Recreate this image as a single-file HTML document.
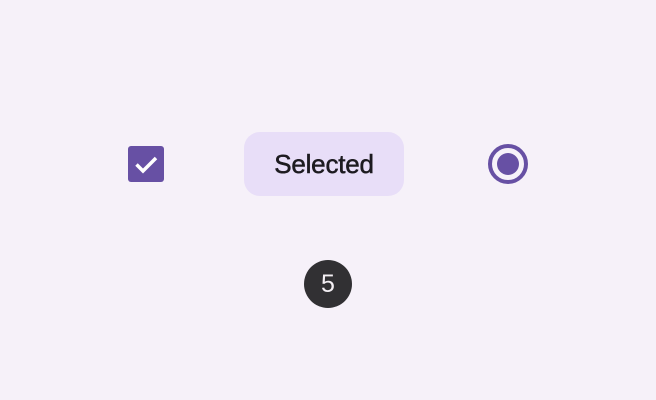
<!DOCTYPE html>
<html><head><style>
html,body{margin:0;padding:0;}
body{width:656px;height:400px;background:#f6f1f9;position:relative;overflow:hidden;font-family:"Liberation Sans",sans-serif;}
.cb{position:absolute;left:128px;top:146px;width:36px;height:36px;background:#6750a4;border-radius:3px;}
.chip{position:absolute;left:244px;top:132px;width:160px;height:64px;background:#e8def8;border-radius:16px;color:#1d1b20;font-size:26px;line-height:64px;text-align:center;-webkit-text-stroke:0.5px #1d1b20;letter-spacing:-0.2px;}
.radio{position:absolute;left:488px;top:144px;width:32px;height:32px;border:4px solid #6750a4;border-radius:50%;}
.radio:after{content:"";position:absolute;left:5px;top:5px;width:22px;height:22px;border-radius:50%;background:#6750a4;}
.badge{position:absolute;left:304px;top:260px;width:48px;height:48px;border-radius:50%;background:#313033;color:#f4eff4;font-size:25px;line-height:49px;text-align:center;}
</style></head><body>
<div class="cb"><svg width="36" height="36" viewBox="0 0 36 36"><path d="M8.5 18.5 L15 25 L28 12" fill="none" stroke="#fff" stroke-width="3.5"/></svg></div>
<div class="chip">Selected</div>
<div class="radio"></div>
<div class="badge">5</div>
</body></html>
